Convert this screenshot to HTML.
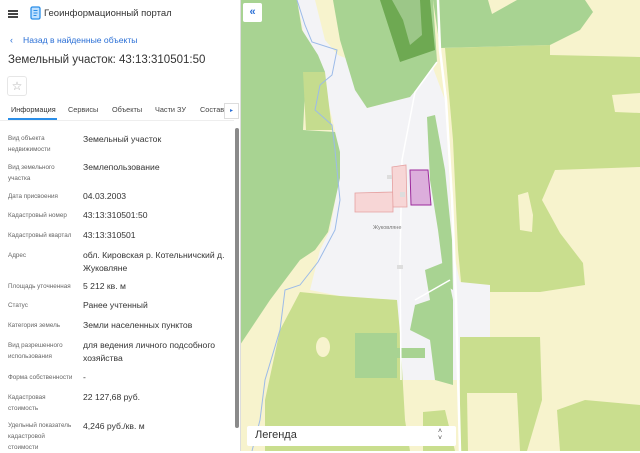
<!DOCTYPE html>
<html><head><meta charset="utf-8"><style>
*{margin:0;padding:0;box-sizing:border-box}
body{width:640px;height:451px;overflow:hidden;font-family:"Liberation Sans",sans-serif;background:#fff;position:relative;color:#333}
.a{position:absolute;white-space:nowrap}
.l{position:absolute;left:8px;font-size:6.3px;color:#666;line-height:11px;white-space:nowrap}
.v{position:absolute;left:83px;font-size:8.6px;color:#333;line-height:12.5px;white-space:nowrap}
</style></head><body>
<div class="a" style="left:8px;top:10px;width:10px;height:1.5px;background:#444;box-shadow:0 3px 0 #444,0 6px 0 #444"></div>
<svg class="a" style="left:29px;top:6px" width="12" height="14" viewBox="0 0 12 14"><rect x="2" y="1" width="9" height="12" rx="1.5" fill="#bfe0ff" stroke="#2a8ee8" stroke-width="1.3"/><path d="M4.5 4.5h4M4.5 7h4M4.5 9.5h3" stroke="#2a8ee8" stroke-width="1"/></svg>
<div class="a" style="left:44px;top:8px;font-size:9.5px;color:#333">Геоинформационный портал</div>
<div class="a" style="left:10px;top:35px;font-size:9px;color:#2a6fd6">‹</div>
<div class="a" style="left:23px;top:35px;font-size:8.6px;color:#2a6fd6">Назад в найденные объекты</div>
<div class="a" style="left:8px;top:54px;font-size:11.5px;color:#333">Земельный участок: 43:13:310501:50</div>
<div class="a" style="left:7px;top:76px;width:20px;height:20px;border:1px solid #e6e6e6;border-radius:3px;font-size:12px;color:#aaa;text-align:center;line-height:18px">☆</div>
<div class="a" style="left:11px;top:105px;font-size:7.3px;color:#333">Информация</div>
<div class="a" style="left:68px;top:105px;font-size:7.3px;color:#444">Сервисы</div>
<div class="a" style="left:112px;top:105px;font-size:7.3px;color:#444">Объекты</div>
<div class="a" style="left:155px;top:105px;font-size:7.3px;color:#444">Части ЗУ</div>
<div class="a" style="left:200px;top:105px;font-size:7.3px;color:#444">Состав</div>
<div class="a" style="left:224px;top:103px;width:15px;height:16px;border:1px solid #ddd;background:#fff;font-size:6px;color:#2a6fd6;text-align:center;line-height:14px">▸</div>
<div class="a" style="left:0;top:120px;width:234px;height:1px;background:#eee"></div>
<div class="a" style="left:8px;top:118px;width:49px;height:2px;background:#2a8ee8"></div>
<div class="a" style="left:235px;top:128px;width:4px;height:300px;background:#8a8a8a;border-radius:2px"></div>
<div class="a" style="left:240px;top:0;width:1px;height:451px;background:#ddd"></div>

<div class="l" style="top:133px">Вид объекта<br>недвижимости</div><div class="v" style="top:133px">Земельный участок</div>
<div class="l" style="top:162px">Вид земельного<br>участка</div><div class="v" style="top:161px">Землепользование</div>
<div class="l" style="top:191px">Дата присвоения</div><div class="v" style="top:190px">04.03.2003</div>
<div class="l" style="top:210px">Кадастровый номер</div><div class="v" style="top:209px">43:13:310501:50</div>
<div class="l" style="top:230px">Кадастровый квартал</div><div class="v" style="top:229px">43:13:310501</div>
<div class="l" style="top:250px">Адрес</div><div class="v" style="top:249px">обл. Кировская р. Котельничский д.<br>Жуковляне</div>
<div class="l" style="top:281px">Площадь уточненная</div><div class="v" style="top:280px">5 212 кв. м</div>
<div class="l" style="top:300px">Статус</div><div class="v" style="top:299px">Ранее учтенный</div>
<div class="l" style="top:320px">Категория земель</div><div class="v" style="top:319px">Земли населенных пунктов</div>
<div class="l" style="top:340px">Вид разрешенного<br>использования</div><div class="v" style="top:339px">для ведения личного подсобного<br>хозяйства</div>
<div class="l" style="top:372px">Форма собственности</div><div class="v" style="top:371px">-</div>
<div class="l" style="top:392px">Кадастровая<br>стоимость</div><div class="v" style="top:391px">22 127,68 руб.</div>
<div class="l" style="top:420px">Удельный показатель<br>кадастровой<br>стоимости</div><div class="v" style="top:420px">4,246 руб./кв. м</div>

<svg class="a" style="left:241px;top:0" width="399" height="451" viewBox="1 0 399 451">
<rect x="0" y="0" width="400" height="451" fill="#f7f3cd"/>
<!-- right yellow-green -->
<path d="M205 48 L310 45 L310 55 L400 57 L400 167 L315 170 L302 200 L320 233 L343 263 L345 285 L300 292 L222 292 L218 250 L213 140 Z" fill="#c9de8e"/>
<path d="M372 95 L400 93 L400 113 L375 112Z" fill="#f7f3cd"/>
<path d="M278 195 L288 192 L293 215 L292 232 L280 230Z" fill="#f7f3cd"/>
<!-- top right green -->
<path d="M193 0 L248 0 L252 14 L277 0 L345 0 L353 12 L340 30 L310 45 L200 48 Z" fill="#a8d392"/>
<!-- village / river corridor gray -->
<path d="M57 0 L93 0 L127 108 L170 97 L193 68 L205 100 L213 250 L220 282 L250 285 L250 380 L157 380 L157 300 L100 296 L70 290 L80 250 L90 230 L100 175 L95 130 L80 70 L65 40 Z" fill="#f3f3f6"/>
<!-- cream bits in river corridor -->
<path d="M75 0 L93 0 L110 60 L98 55 L85 40 Z" fill="#f7f3cd"/>
<!-- left green -->
<path d="M0 0 L57 0 L62 30 L78 55 L85 72 L66 72 L63 130 L95 132 L100 152 L100 178 L94 205 L88 232 L75 250 L60 260 L30 300 L0 345Z" fill="#a8d392"/>
<path d="M63 72 L85 72 L92 130 L66 130Z" fill="#c5dc8e"/>
<!-- mid block green -->
<path d="M93 0 L193 0 L197 62 L180 85 L170 97 L127 108 L115 90 L100 40 Z" fill="#a8d392"/>
<path d="M140 0 L190 0 L195 50 L160 62 Z" fill="#6ea952"/>
<path d="M152 0 L180 0 L182 35 L170 45 L163 20 Z" fill="#9cc788"/>
<!-- green strips in village -->
<path d="M187 117 L195 115 L205 170 L212 240 L213 290 L205 285 L198 230 L190 180Z" fill="#a8d392"/>
<path d="M185 270 L205 262 L213 300 L213 385 L195 380 L190 340 L170 330 L175 305 L190 300Z" fill="#a8d392"/>
<!-- bottom left yellow-green -->
<path d="M60 292 L100 296 L157 300 L160 333 L165 420 L170 451 L25 451 L25 400 L40 330Z" fill="#c9de8e"/>
<ellipse cx="83" cy="347" rx="7" ry="10" fill="#f7f3cd"/>
<path d="M115 333 L157 333 L157 378 L115 378Z" fill="#a8d392"/>
<path d="M157 348 L185 348 L185 358 L157 358Z" fill="#a8d392"/>
<!-- bottom middle / right -->
<path d="M183 412 L205 410 L215 451 L183 451Z" fill="#c9de8e"/>
<path d="M220 337 L300 337 L302 400 L287 451 L220 451 Z" fill="#c9de8e"/>
<path d="M227 393 L277 393 L280 451 L228 451Z" fill="#f7f3cd"/>
<path d="M317 410 L345 400 L400 405 L400 451 L320 451Z" fill="#c9de8e"/>
<!-- roads -->
<path d="M198 0 L200 50 L206 100 L212 200 L216 300 L220 451" stroke="#fff" stroke-width="2.5" fill="none"/>
<path d="M197 62 L175 92 L162 160 L160 260 L161 380" stroke="#fff" stroke-width="1.5" fill="none"/>
<path d="M175 300 L210 280" stroke="#fff" stroke-width="1.5" fill="none"/>
<!-- river -->
<path d="M57 0 L65 25 L72 42 L97 50 L92 75 L80 85 L75 110 L92 125 L95 150 L100 200 L95 230 L78 262 L60 285 L45 290 L40 330 L25 380 L20 420 L12 451" stroke="#9cbbe8" stroke-width="1" fill="none"/>
<!-- parcels -->
<path d="M115 193 L153 192 L153 212 L115 212Z" fill="#f7d6d6" stroke="#e5a0a0" stroke-width="0.8"/>
<path d="M152 167 L166 165 L167 207 L153 207Z" fill="#f7d6d6" stroke="#e5a0a0" stroke-width="0.8"/>
<path d="M170 170 L188 170 L191 205 L171 205Z" fill="#dcaedc" stroke="#9c2a9c" stroke-width="1"/>
<rect x="147" y="175" width="5" height="4" fill="#ddd"/>
<rect x="160" y="192" width="5" height="5" fill="#ddd"/>
<rect x="157" y="265" width="6" height="4" fill="#ddd"/>
<text x="133" y="229" font-family="Liberation Sans" font-size="5.5" fill="#777">Жуковляне</text>
</svg>
<div class="a" style="left:243px;top:3px;width:19px;height:19px;background:#fff;border-radius:2px;color:#2a6fd6;font-size:11px;text-align:center;line-height:18px;font-weight:bold">«</div>
<div class="a" style="left:247px;top:426px;width:209px;height:20px;background:#fff;border-radius:2px"></div>
<div class="a" style="left:255px;top:429px;font-size:11px;color:#333">Легенда</div>
<div class="a" style="left:438px;top:428px;font-size:7px;color:#444;line-height:7px;text-align:center">˄<br>˅</div>
</body></html>
